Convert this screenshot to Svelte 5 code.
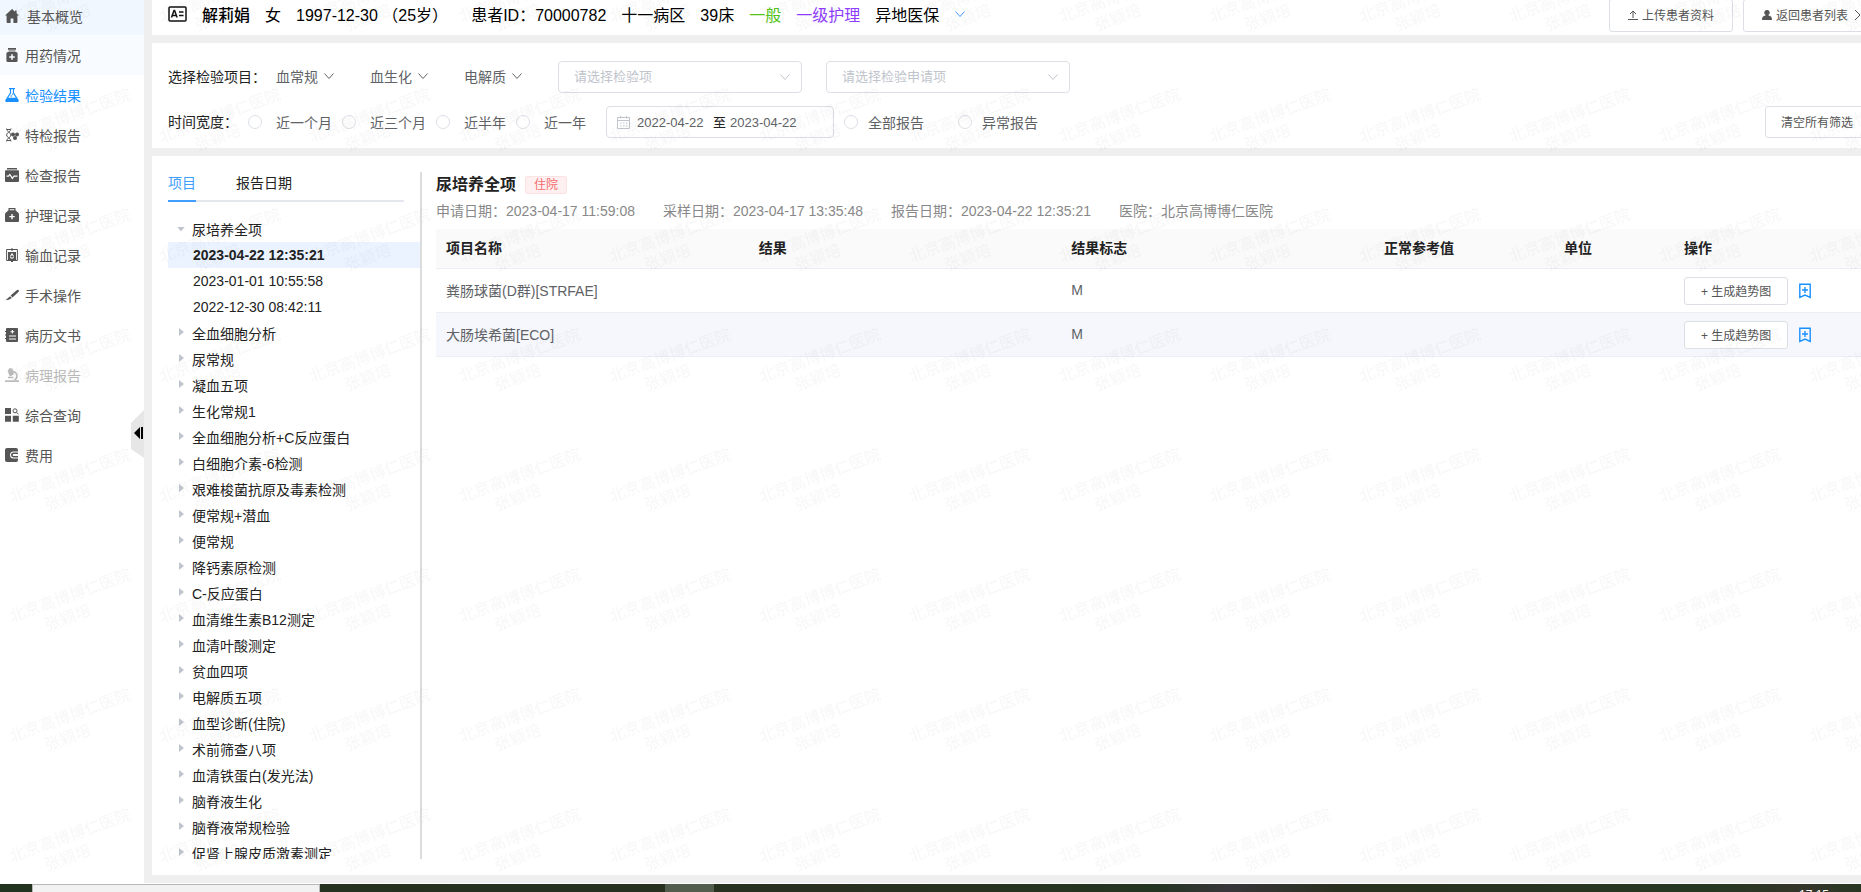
<script lang="ts">
	type MenuItem = { label: string; icon: string; state?: string };

	const menu: MenuItem[] = [
		{ label: '基本概览', icon: 'home', state: 'current' },
		{ label: '用药情况', icon: 'drug', state: 'hover' },
		{ label: '检验结果', icon: 'flask', state: 'active' },
		{ label: '特检报告', icon: 'gene' },
		{ label: '检查报告', icon: 'pulse' },
		{ label: '护理记录', icon: 'bag' },
		{ label: '输血记录', icon: 'blood' },
		{ label: '手术操作', icon: 'knife' },
		{ label: '病历文书', icon: 'book' },
		{ label: '病理报告', icon: 'scope', state: 'disabled' },
		{ label: '综合查询', icon: 'query' },
		{ label: '费用', icon: 'wallet' }
	];

	const groups = ['血常规', '血生化', '电解质'];
	const ranges = ['近一个月', '近三个月', '近半年', '近一年'];
	const kinds = ['全部报告', '异常报告'];

	const reportDates = ['2023-04-22 12:35:21', '2023-01-01 10:55:58', '2022-12-30 08:42:11'];

	const projects = [
		'全血细胞分析',
		'尿常规',
		'凝血五项',
		'生化常规1',
		'全血细胞分析+C反应蛋白',
		'白细胞介素-6检测',
		'艰难梭菌抗原及毒素检测',
		'便常规+潜血',
		'便常规',
		'降钙素原检测',
		'C-反应蛋白',
		'血清维生素B12测定',
		'血清叶酸测定',
		'贫血四项',
		'电解质五项',
		'血型诊断(住院)',
		'术前筛查八项',
		'血清铁蛋白(发光法)',
		'脑脊液生化',
		'脑脊液常规检验',
		'促肾上腺皮质激素测定'
	];

	const meta = [
		'申请日期：2023-04-17 11:59:08',
		'采样日期：2023-04-17 13:35:48',
		'报告日期：2023-04-22 12:35:21',
		'医院：北京高博博仁医院'
	];

	const results = [
		{ name: '粪肠球菌(D群)[STRFAE]', value: '', flag: 'M', range: '', unit: '' },
		{ name: '大肠埃希菌[ECO]', value: '', flag: 'M', range: '', unit: '' }
	];

	let activeTab = $state('项目');
	let activeDate = $state(reportDates[0]);
	let dateFrom = $state('2022-04-22');
	let dateTo = $state('2023-04-22');
</script>

{#snippet chevron()}
	<svg class="chevron" viewBox="0 0 12 12" aria-hidden="true">
		<path d="M1.5 3.5 6 8.5l4.5-5" />
	</svg>
{/snippet}

{#snippet menuIcon(name: string)}
	<svg class="menu-icon" viewBox="0 0 14 14" aria-hidden="true">
		{#if name === 'home'}
			<path d="M7 0 0 6.6h1.6V13a1 1 0 0 0 1 1h3V9.5h2.8V14h3a1 1 0 0 0 1-1V6.6H14L11.6 4.3V1.5H10v1.3z" />
		{:else if name === 'drug'}
			<path d="M3 0h8v1.8H3zM3.5 2.6h7v1h-7z" />
			<path
				fill-rule="evenodd"
				d="M3 4h8a1.6 1.6 0 0 1 1.6 1.6v6.8A1.6 1.6 0 0 1 11 14H3a1.6 1.6 0 0 1-1.6-1.6V5.6A1.6 1.6 0 0 1 3 4zm3.2 2.3v1.9H4.2v1.6h2v2h1.6v-2h2V8.2h-2V6.3z"
			/>
		{:else if name === 'flask'}
			<path
				fill-rule="evenodd"
				d="M4 0h6v1.2H9v3.6L13.6 12c.6 1 0 2-1.1 2h-11C.4 14-.2 13 .4 12L5 4.8V1.2H4zm2.1 1.2V5.2L3.2 9.8h7.6L7.9 5.2V1.2z"
			/>
			<circle cx="6.2" cy="8" r=".8" />
			<circle cx="7.6" cy="6.2" r=".6" />
		{:else if name === 'gene'}
			<g class="line">
				<path d="M1.5.5C1.5 4 6 4.5 6 7s-4.5 3-4.5 6.5M6 .5C6 4 1.5 4.5 1.5 7S6 10 6 13.5" />
				<path d="M2 1.5h3.5M2 12.5h3.5" />
			</g>
			<circle cx="8" cy="6.5" r="2" />
			<circle cx="12" cy="6.5" r="2" />
			<circle cx="10" cy="10" r="2" />
		{:else if name === 'pulse'}
			<path d="M2 0h10v1.5H2z" />
			<path
				fill-rule="evenodd"
				d="M1 2.3h12a1 1 0 0 1 1 1V13a1 1 0 0 1-1 1H1a1 1 0 0 1-1-1V3.3a1 1 0 0 1 1-1zM1.500 7.5v1.2h2.300l1-1.300 2.500 4 2-2.700h3.200V7.500H8.800L7.400 9.300 4.900 5.400 3.200 7.500z"
			/>
		{:else if name === 'bag'}
			<path
				fill-rule="evenodd"
				d="M3.5 0h7v2.2L13 4.5a2 2 0 0 1 1 1.7V13a1 1 0 0 1-1 1H1a1 1 0 0 1-1-1V6.2a2 2 0 0 1 1-1.7l2.5-2.3zm1.2 1.2v1h4.6v-1zM6.3 6v2H4.300v1.300h2v2h1.400v-2h2V8h-2V6z"
			/>
		{:else if name === 'blood'}
			<path class="line" d="M1.6 1.5h10.8v11H1.600z" />
			<path d="M6.500 0h1v3h-1zM6 12h2v2H6z" />
			<path
				fill-rule="evenodd"
				d="M3 4h8v8H3zm4 1S5 7.400 5 8.700a2 2 0 0 0 4 0C9 7.400 7 5 7 5z"
			/>
			<path d="M6.600 7h.9v1h1v.9h-1v1h-.9v-1h-1V8h1z" />
		{:else if name === 'knife'}
			<path d="M13.7 2.2a1.4 1.4 0 0 0-2 0L5.6 7.600l1.900 2 5.900-5.500c.6-.5.7-1.400.3-1.900zM5 8.200.5 12.300l3.300-.5 3.100-1.700z" />
		{:else if name === 'book'}
			<path
				fill-rule="evenodd"
				d="M2 0h10a1 1 0 0 1 1 1v12a1 1 0 0 1-1 1H2a1 1 0 0 1-1-1v-2H0v-1h1V7.5H0v-1h1V4H0V3h1V1a1 1 0 0 1 1-1zm4.800 2v1.200H5.500v1.100h1.300v1.200h1.100V4.300h1.300V3.200H7.900V2zM4 7.500v1h7v-1zm0 3v1h7v-1z"
			/>
		{:else if name === 'scope'}
			<path d="M4.500 0 7.500.8l1.300 5.700-4 2L2.600 3z" />
			<path class="line heavy" d="M8 3.500c5 1 5 6.500 1.500 8.500M3 9.500h5.500" />
			<path d="M0 12.300h14V14H0z" />
		{:else if name === 'query'}
			<path d="M0 0h6v6H0zM0 7.8h6v6H0zM7.800 7.800h6v6h-6z" />
			<circle class="line" cx="10" cy="2.800" r="2" />
			<path class="line" d="m11.500 4.300 2 2" />
		{:else}
			<path
				fill-rule="evenodd"
				d="M2 0h9a2 2 0 0 1 2 2v1.500H8.500a3.500 3.500 0 0 0 0 7H13V12a2 2 0 0 1-2 2H2a2 2 0 0 1-2-2V2a2 2 0 0 1 2-2zm6.500 4.500H13V6H8.700a1 1 0 0 0 0 2H13v1.500H8.500a2.500 2.500 0 0 1 0-5z"
			/>
		{/if}
	</svg>
{/snippet}

<div class="screen">
	<div class="app">
		<nav class="sidebar">
			{#each menu as item (item.label)}
				<a href="#{item.icon}" class="menu-item {item.state ?? ''}">
					{@render menuIcon(item.icon)}
					<span>{item.label}</span>
				</a>
			{/each}
			<button class="collapse" aria-label="收起菜单">
				<svg viewBox="0 0 13 48">
					<path class="tab-shape" d="M13 0v48L0 39V13z" />
					<path d="M9 17v12l-6-6zM10 17h2v12h-2z" />
				</svg>
			</button>
		</nav>

		<main class="main">
			<header class="card patient">
				<div class="info">
					<svg class="id-card" viewBox="0 0 19 16" aria-hidden="true">
						<rect x="1" y="1" width="17" height="14" rx="1" />
						<path d="M3.5 11.5 6 4.5h.6l2.500 7M4.500 9.500h3.800M11 6h4.500M11 9.500h4.500" />
					</svg>
					<strong>解莉娟</strong>
					<span>女</span>
					<span>1997-12-30 （25岁）</span>
					<span class="patient-id">患者ID：70000782</span>
					<span>十一病区</span>
					<span>39床</span>
					<span class="level">一般</span>
					<span class="nursing">一级护理</span>
					<span>异地医保</span>
					<button class="more" aria-label="展开患者信息">{@render chevron()}</button>
				</div>
				<div class="actions">
					<button class="btn tall">
						<svg class="btn-icon outline" viewBox="0 0 10 10" aria-hidden="true">
							<path d="M5 8V1M2 4l3-3 3 3M0 9.500h10" />
						</svg>
						上传患者资料
					</button>
					<button class="btn tall">
						<svg class="btn-icon" viewBox="0 0 10 10" aria-hidden="true">
							<path d="M5 0a2.600 2.600 0 0 1 1.500 4.800L6.500 5.500C9 6 10 7 10 10H0C0 7 1 6 3.500 5.500V4.800A2.600 2.600 0 0 1 5 0z" />
						</svg>
						返回患者列表
						<svg class="btn-icon outline" viewBox="0 0 10 10" aria-hidden="true">
							<path d="m3 0 5 5-5 5" />
						</svg>
					</button>
				</div>
			</header>

			<section class="card filters">
				<div class="filter-row">
					<span class="filter-label">选择检验项目：</span>
					{#each groups as group (group)}
						<button class="dropdown">{group}{@render chevron()}</button>
					{/each}
					<div class="select-box">
						<select aria-label="检验项">
							<option>请选择检验项</option>
						</select>
						{@render chevron()}
					</div>
					<div class="select-box">
						<select aria-label="检验申请项">
							<option>请选择检验申请项</option>
						</select>
						{@render chevron()}
					</div>
				</div>
				<div class="filter-row">
					<span class="filter-label">时间宽度：</span>
					<div class="radios">
						{#each ranges as range (range)}
							<label><input type="radio" name="range" value={range} />{range}</label>
						{/each}
					</div>
					<div class="date-range">
						<svg viewBox="0 0 13 13" aria-hidden="true">
							<path d="M.5 1.500h12v11H.5zM.5 4.500h12M3.500 0v2.500M9.500 0v2.500M3 7h1.500M6 7h1.500M9 7h1.500M3 10h1.500M6 10h1.500M9 10h1.500" />
						</svg>
						<input type="text" aria-label="开始日期" bind:value={dateFrom} />
						<span>至</span>
						<input type="text" aria-label="结束日期" bind:value={dateTo} />
					</div>
					<div class="radios kinds">
						{#each kinds as kind (kind)}
							<label><input type="radio" name="kind" value={kind} />{kind}</label>
						{/each}
					</div>
					<button class="btn clear">清空所有筛选</button>
				</div>
			</section>

			<section class="card content">
				<aside class="tree-panel">
					<div class="tabs" role="tablist">
						{#each ['项目', '报告日期'] as tab (tab)}
							<button
								role="tab"
								aria-selected={activeTab === tab}
								class:active={activeTab === tab}
								onclick={() => (activeTab = tab)}
							>
								{tab}
							</button>
						{/each}
					</div>
					<ul class="tree">
						<li><button class="node open"><i></i>尿培养全项</button></li>
						{#each reportDates as date (date)}
							<li>
								<button
									class="leaf"
									class:active={activeDate === date}
									onclick={() => (activeDate = date)}>{date}</button
								>
							</li>
						{/each}
						{#each projects as project (project)}
							<li><button class="node"><i></i>{project}</button></li>
						{/each}
					</ul>
				</aside>

				<article class="report">
					<div class="title">
						<h1>尿培养全项</h1>
						<span class="tag">住院</span>
					</div>
					<div class="meta">
						{#each meta as text (text)}
							<span>{text}</span>
						{/each}
					</div>
					<table>
						<colgroup>
							<col />
							<col />
							<col />
							<col class="col-range" />
							<col class="col-unit" />
							<col class="col-action" />
						</colgroup>
						<thead>
							<tr>
								<th>项目名称</th>
								<th>结果</th>
								<th>结果标志</th>
								<th>正常参考值</th>
								<th>单位</th>
								<th>操作</th>
							</tr>
						</thead>
						<tbody>
							{#each results as row (row.name)}
								<tr>
									<td>{row.name}</td>
									<td>{row.value}</td>
									<td>{row.flag}</td>
									<td>{row.range}</td>
									<td>{row.unit}</td>
									<td>
										<div class="row-actions">
											<button class="btn small">+ 生成趋势图</button>
											<button class="mark" aria-label="收藏">
												<svg viewBox="0 0 12 16">
													<path d="M.8 1.200h10.400v13.200L6 12 .8 14.400zM6 4v6M3 7h6" />
												</svg>
											</button>
										</div>
									</td>
								</tr>
							{/each}
						</tbody>
					</table>
				</article>
			</section>
		</main>

		<svg class="watermark" aria-hidden="true">
			<defs>
				<pattern id="mark" y="60" width="150" height="120" patternUnits="userSpaceOnUse">
					<text transform="translate(70 56) rotate(-20)" y="5">北京高博博仁医院</text>
					<text transform="translate(68 78) rotate(-20)" y="5">张颖培</text>
				</pattern>
			</defs>
			<rect width="100%" height="100%" fill="url(#mark)" />
		</svg>
	</div>

	<footer class="taskbar">
		<div class="search"></div>
		<div class="running"></div>
		<time>17:15</time>
	</footer>
</div>

<style>
	:global(body) {
		margin: 0;
		overflow: hidden;
	}

	.screen {
		height: 100vh;
		display: flex;
		flex-direction: column;
		overflow: hidden;
		font-family: 'Liberation Sans', 'Noto Sans CJK SC', sans-serif;
		font-size: 14px;
		color: #222;
	}

	.screen * {
		box-sizing: border-box;
	}

	button,
	input,
	select {
		font: inherit;
		color: inherit;
		margin: 0;
	}

	button {
		background: none;
		border: none;
		padding: 0;
		cursor: pointer;
		white-space: nowrap;
	}

	.app {
		flex: 1;
		min-height: 0;
		display: flex;
		position: relative;
		overflow: hidden;
		border-bottom: 1px solid #fff;
		background: #efefef;
	}

	.sidebar {
		position: relative;
		flex: 0 0 144px;
		background: #fff;
	}

	.menu-item {
		display: flex;
		align-items: center;
		gap: 6px;
		height: 40px;
		padding-left: 5px;
		color: #555;
		text-decoration: none;
	}

	.menu-item.current {
		height: 35px;
		gap: 8px;
		padding-bottom: 4px;
		background: #f0f7ff;
	}

	.menu-item.hover {
		background: #f8fbff;
	}

	.menu-item.active {
		color: #1890ff;
	}

	.menu-item.disabled {
		color: #bbb;
	}

	.menu-icon {
		width: 14px;
		height: 14px;
		fill: currentColor;
	}

	.menu-icon .line {
		fill: none;
		stroke: currentColor;
	}

	.menu-icon .heavy {
		stroke-width: 1.6;
	}

	.collapse {
		position: absolute;
		top: 410px;
		right: 0;
		width: 13px;
		height: 48px;
	}

	.collapse svg {
		display: block;
		width: 13px;
		height: 48px;
	}

	.tab-shape {
		fill: #e6e6e6;
	}

	/* the cards run past the right edge of the window */
	.main {
		flex: 1;
		min-width: 0;
		display: flex;
		flex-direction: column;
		gap: 8px;
		margin: 0 -24px 8px 8px;
	}

	.card {
		background: #fff;
	}

	.patient {
		display: flex;
		justify-content: space-between;
		align-items: flex-end;
		height: 35px;
		padding: 0 4px 3px 16px;
		overflow: hidden;
		font-size: 16px;
		color: #000;
	}

	.info {
		display: flex;
		align-items: center;
		gap: 15px;
		height: 33px;
		padding-bottom: 4px;
		white-space: nowrap;
	}

	.info strong {
		font-weight: 500;
	}

	.patient-id {
		margin-left: 8px;
	}

	.id-card {
		width: 19px;
		height: 16px;
		fill: none;
		stroke: #111;
		stroke-width: 1.5;
	}

	.level {
		color: #52c41a;
	}

	.nursing {
		color: #8e3cff;
	}

	.more {
		display: flex;
		color: #409eff;
	}

	.chevron {
		width: 12px;
		height: 12px;
		fill: none;
		stroke: currentColor;
	}

	.actions {
		display: flex;
		gap: 10px;
	}

	.btn {
		display: flex;
		align-items: center;
		gap: 4px;
		height: 32px;
		padding: 0 15px 1px;
		border: 1px solid #dcdfe6;
		border-radius: 3px;
		background: #fff;
		font-size: 12px;
		color: #555;
	}

	.btn.tall {
		height: 33px;
		padding: 0 18px 2px;
	}

	.btn.small {
		height: 28px;
		padding: 0 16px;
	}

	.btn-icon {
		width: 10px;
		height: 10px;
		fill: currentColor;
	}

	.btn-icon.outline {
		fill: none;
		stroke: currentColor;
	}

	.filters {
		display: flex;
		flex-direction: column;
		gap: 13px;
		padding: 18px 16px 10px;
	}

	.filter-row {
		display: flex;
		align-items: center;
		height: 32px;
		white-space: nowrap;
	}

	.filter-label {
		flex: none;
		padding-bottom: 3px;
	}

	.filter-row:first-child .filter-label {
		width: 108px;
	}

	.filter-row:last-child .filter-label {
		width: 80px;
	}

	.dropdown {
		display: flex;
		align-items: center;
		gap: 5px;
		width: 94px;
		padding-bottom: 3px;
		color: #606266;
	}

	.select-box {
		position: relative;
		width: 244px;
		margin-right: 24px;
		color: #c0c4cc;
	}

	.select-box select {
		appearance: none;
		display: block;
		width: 100%;
		height: 32px;
		padding: 0 15px 2px;
		border: 1px solid #dcdfe6;
		border-radius: 4px;
		background: #fff;
		font-size: 13px;
	}

	.select-box .chevron {
		position: absolute;
		top: 10px;
		right: 11px;
		pointer-events: none;
	}

	.radios {
		display: flex;
		gap: 10px;
		margin-right: 20px;
		color: #606266;
	}

	.radios label {
		display: flex;
		align-items: center;
		gap: 14px;
	}

	.radios input {
		appearance: none;
		width: 14px;
		height: 14px;
		border: 1px solid #dcdfe6;
		border-radius: 50%;
		background: #fff;
	}

	.radios input:checked {
		border: 4px solid #409eff;
	}

	.kinds {
		gap: 34px;
	}

	.kinds label {
		gap: 10px;
	}

	.date-range {
		display: flex;
		align-items: center;
		width: 228px;
		height: 32px;
		margin-right: 10px;
		padding: 0 10px;
		border: 1px solid #dcdfe6;
		border-radius: 4px;
		font-size: 13px;
	}

	.date-range svg {
		width: 13px;
		height: 13px;
		margin-right: 7px;
		fill: none;
		stroke: #c0c4cc;
	}

	.date-range input {
		width: 76px;
		padding: 0;
		border: none;
		outline: none;
		background: none;
		color: #606266;
	}

	.date-range span {
		margin-right: 4px;
		padding-bottom: 2px;
	}

	.clear {
		margin-left: auto;
	}

	.content {
		flex: 1;
		min-height: 0;
		display: flex;
		padding: 16px;
	}

	.tree-panel {
		flex: 0 0 254px;
		display: flex;
		flex-direction: column;
		border-right: 2px solid #dcdcdc;
	}

	.tabs {
		display: flex;
		gap: 40px;
		flex: none;
		height: 30px;
		margin: 0 16px 14px 0;
		border-bottom: 2px solid #e4e7ed;
	}

	.tabs button {
		height: 30px;
		padding-bottom: 10px;
		border-bottom: 2px solid transparent;
	}

	.tabs button.active {
		color: #409eff;
		border-bottom-color: #409eff;
	}

	.tree {
		flex: 1;
		min-height: 0;
		margin: 0;
		padding: 0;
		overflow: hidden;
		list-style: none;
	}

	.tree button {
		display: flex;
		align-items: center;
		width: 100%;
		height: 26px;
	}

	.node i {
		width: 5px;
		height: 8px;
		margin: 0 8px 2px 11px;
		background: #c0c4cc;
		clip-path: polygon(0 0, 100% 50%, 0 100%);
	}

	.node.open i {
		width: 8px;
		height: 5px;
		margin: 0 7px 0 9px;
		clip-path: polygon(0 0, 100% 0, 50% 100%);
	}

	.tree .leaf {
		padding-left: 25px;
	}

	.leaf.active {
		background: #eaf3ff;
		font-weight: 700;
	}

	.report {
		flex: 1;
		min-width: 0;
		padding-left: 14px;
	}

	.title {
		display: flex;
		align-items: center;
		gap: 9px;
		height: 26px;
	}

	h1 {
		margin: 0;
		padding-bottom: 4px;
		font-size: 16px;
		font-weight: 700;
	}

	.tag {
		height: 18px;
		padding: 0 8px;
		border: 1px solid #fde2e2;
		border-radius: 2px;
		background: #fef0f0;
		font-size: 12px;
		line-height: 16px;
		color: #f56c6c;
	}

	.meta {
		display: flex;
		align-items: center;
		gap: 28px;
		height: 26px;
		margin-bottom: 5px;
		padding-bottom: 2px;
		color: #888;
	}

	table {
		width: 100%;
		table-layout: fixed;
		border-collapse: separate;
		border-spacing: 0;
	}

	.col-range {
		width: 180px;
	}

	.col-unit {
		width: 120px;
	}

	.col-action {
		width: 195px;
	}

	th,
	td {
		padding: 0 10px;
		border-bottom: 1px solid #ebeef5;
		text-align: left;
	}

	th {
		height: 40px;
		padding-bottom: 4px;
		background: #fafafa;
	}

	td {
		height: 44px;
		padding-bottom: 2px;
		color: #606266;
	}

	td:last-child {
		padding-bottom: 0;
	}

	tbody tr:nth-child(even) td {
		background: #f5f7fc;
	}

	.row-actions {
		display: flex;
		align-items: center;
		gap: 11px;
	}

	.mark svg {
		display: block;
		width: 12px;
		height: 16px;
		fill: none;
		stroke: #1890ff;
		stroke-width: 1.4;
	}

	.watermark {
		position: absolute;
		inset: 0;
		width: 100%;
		height: 100%;
		pointer-events: none;
	}

	.watermark text {
		font-size: 16px;
		text-anchor: middle;
		fill: #000;
		fill-opacity: 0.03;
	}

	.taskbar {
		flex: 0 0 8px;
		display: flex;
		padding-left: 32px;
		overflow: hidden;
		background: linear-gradient(
			90deg,
			#22331f 0%,
			#29301f 45%,
			#243522 62%,
			#38363a 66%,
			#29301f 72%,
			#263822 92%,
			#35352a 97%,
			#283722 100%
		);
	}

	.search {
		width: 288px;
		border: 1px solid #b5b8b3;
		border-bottom: none;
		background: #f2f2f2;
	}

	.running {
		width: 49px;
		margin-left: 345px;
		background: #525d4e;
	}

	.taskbar time {
		margin: 4px 32px 0 auto;
		font-size: 12px;
		line-height: 14px;
		color: #fff;
	}
</style>
